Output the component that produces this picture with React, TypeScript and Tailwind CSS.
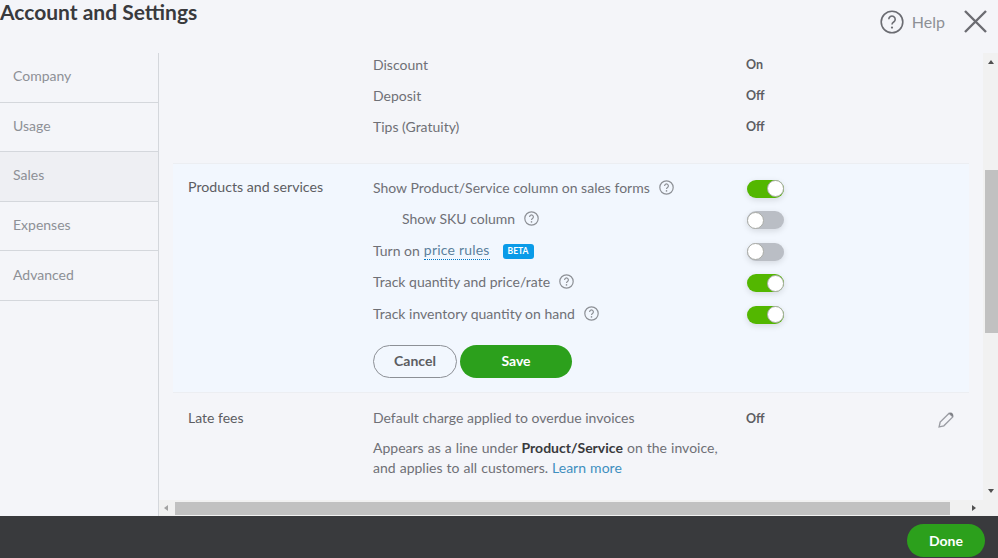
import React from "react";

const font = { fontFamily: 'Lato, "Open Sans", "Liberation Sans", sans-serif' };

function Q({ className = "" }: { className?: string }) {
  return (
    <svg width="15" height="15" viewBox="0 0 15 15" className={"shrink-0 " + className}>
      <circle cx="7.5" cy="7.5" r="6.7" fill="none" stroke="#8d9096" strokeWidth="1.2" />
      <path d="M5.6 5.9a1.9 1.9 0 1 1 2.9 1.6c-.6.4-1 .7-1 1.5" fill="none" stroke="#8d9096" strokeWidth="1.2" />
      <circle cx="7.5" cy="10.9" r=".8" fill="#8d9096" />
    </svg>
  );
}

function Toggle({ on }: { on: boolean }) {
  return (
    <div
      className={
        "w-[37px] h-[18px] rounded-full flex items-center shadow-[0_2px_6px_rgba(0,0,0,0.12)] " +
        (on ? "bg-[#53b700] justify-end" : "bg-[#babec5] justify-start")
      }
    >
      <div className="w-[17px] h-[17px] rounded-full bg-white border border-[#a8aaa5]" />
    </div>
  );
}

function Row({ children, on }: { children: React.ReactNode; on: boolean }) {
  return (
    <div className="h-[31.6px] flex items-center">
      <div className="w-[374px] pb-[3px] flex items-center text-[14px] text-[#6f7076]">{children}</div>
      <Toggle on={on} />
    </div>
  );
}

function Nav({ label, active }: { label: string; active?: boolean }) {
  return (
    <div
      className={
        "h-[49.6px] pl-[13px] pb-[3px] flex items-center text-[14px] text-[#8d9096] border-b border-[#d4d7dc] " +
        (active ? "bg-[#eeeff3]" : "")
      }
    >
      {label}
    </div>
  );
}

function Simple({ label, value }: { label: string; value: string }) {
  return (
    <div className="h-[31px] flex items-center pl-[214px]">
      <div className="w-[373px] pb-[1px] text-[14px] text-[#6f7076]">{label}</div>
      <div className="pt-[1px] text-[12.5px] font-bold text-[#5c5d62]">{value}</div>
    </div>
  );
}

export default function App() {
  return (
    <div style={font} className="w-[998px] h-[558px] bg-[#f4f5f9] flex flex-col overflow-hidden">
      <header className="h-[53px] shrink-0 flex items-start justify-between">
        <h1 className="text-[21px] leading-[24px] font-bold text-[#393a3d]">Account and Settings</h1>
        <div className="flex items-center pt-[9px] pr-[10px]">
          <svg width="24" height="24" viewBox="0 0 24 24">
            <circle cx="12" cy="12" r="10.8" fill="none" stroke="#6b6c72" strokeWidth="1.6" />
            <path d="M8.8 9.3a3.2 3.2 0 1 1 4.9 2.7c-1 .6-1.7 1.1-1.7 2.4" fill="none" stroke="#6b6c72" strokeWidth="1.6" />
            <circle cx="12" cy="17.6" r="1.1" fill="#6b6c72" />
          </svg>
          <span className="ml-[8px] mr-[18px] text-[16px] text-[#8d9096]">Help</span>
          <svg width="25" height="25" viewBox="0 0 25 25">
            <path d="M2 2l21 21M23 2L2 23" stroke="#6b6c72" strokeWidth="2.4" />
          </svg>
        </div>
      </header>

      <div className="flex-1 flex min-h-0">
        <nav className="w-[159px] shrink-0 border-r border-[#d4d7dc]">
          <Nav label="Company" />
          <Nav label="Usage" />
          <Nav label="Sales" active />
          <Nav label="Expenses" />
          <Nav label="Advanced" />
        </nav>

        <div className="flex-1 flex flex-col min-w-0">
          <div className="flex-1 flex min-h-0">
            <main className="flex-1 min-w-0 overflow-hidden">
              <div className="-mt-[4px]">
                <Simple label="Discount" value="On" />
                <Simple label="Deposit" value="Off" />
                <Simple label="Tips (Gratuity)" value="Off" />
              </div>

              <section className="mt-[21px] ml-[14px] w-[796px] h-[230px] bg-[#f2f7fe] border-y border-[#eceef2] flex pl-[15px] pt-[8.8px]">
                <div className="w-[185px] pt-[3px] text-[14.2px] text-[#5c5d62]">Products and services</div>
                <div>
                  <Row on>
                    Show Product/Service column on sales forms
                    <Q className="ml-[9px]" />
                  </Row>
                  <Row on={false}>
                    <span className="ml-[29px]">Show SKU column</span>
                    <Q className="ml-[9px]" />
                  </Row>
                  <Row on={false}>
                    Turn on
                    <span className="ml-[4px] text-[#5b7f9c] border-b border-dotted border-[#0077c5] leading-[19px] tracking-[0.2px]">price rules</span>
                    <span className="ml-[13px] mt-[2px] h-[15px] w-[31px] rounded-[3px] bg-[#0a9be8] text-white text-[8.5px] font-bold flex items-center justify-center">BETA</span>
                  </Row>
                  <Row on>
                    Track quantity and price/rate
                    <Q className="ml-[9px]" />
                  </Row>
                  <Row on>
                    Track inventory quantity on hand
                    <Q className="ml-[9px]" />
                  </Row>
                  <div className="flex mt-[14px]">
                    <button className="w-[84px] h-[33px] pb-[1px] rounded-full border border-[#8d9096] text-[14px] font-bold text-[#5c5d62]">Cancel</button>
                    <button className="ml-[3px] w-[112px] h-[33px] pb-[1px] rounded-full bg-[#2ca01c] text-white text-[14px] font-bold">Save</button>
                  </div>
                </div>
              </section>

              <section className="flex pl-[29px] pt-[15px]">
                <div className="w-[185px] text-[14px] leading-[20px] text-[#5c5d62]">Late fees</div>
                <div className="w-[373px] text-[14px] text-[#6f7076]">
                  <div className="leading-[20px]">Default charge applied to overdue invoices</div>
                  <div className="mt-[10px] leading-[20px] [word-spacing:0.5px]">
                    Appears as a line under <b className="font-bold text-[#393a3d]">Product/Service</b> on the invoice,
                    <br />
                    and applies to all customers. <span className="text-[#3f8fbf]">Learn more</span>
                  </div>
                </div>
                <div className="w-[191px] pt-[1px] text-[12.5px] leading-[20px] font-bold text-[#5c5d62]">Off</div>
                <svg width="19" height="19" viewBox="0 0 18 18" className="mt-[2px]">
                  <path d="M2 16l1-4.5L11.5 3l3.5 3.5L6.5 15z" fill="none" stroke="#9a9ca3" strokeWidth="1.3" />
                  <path d="M11.5 3a2.5 2.5 0 0 1 3.5 3.5z" fill="#7f8187" />
                </svg>
              </section>
            </main>

            <div className="w-[15px] shrink-0 bg-[#f1f1f1] flex flex-col items-center">
              <svg width="8" height="6" viewBox="0 0 8 6" className="mt-[6px]"><path d="M4 1l3 4H1z" fill="#505050" /></svg>
              <div className="w-[13px] ml-[2px] h-[163px] mt-[105px] bg-[#c1c1c1]" />
              <div className="flex-1" />
              <svg width="8" height="6" viewBox="0 0 8 6" className="mb-[6px]"><path d="M4 5l3-4H1z" fill="#505050" /></svg>
            </div>
          </div>

          <div className="h-[16px] shrink-0 flex items-center bg-[#f1f1f1]">
            <svg width="6" height="8" viewBox="0 0 6 8" className="ml-[4px]"><path d="M1 4l4-3v6z" fill="#a3a3a3" /></svg>
            <div className="ml-[6px] w-[775px] h-[13px] bg-[#c1c1c1]" />
            <div className="flex-1" />
            <svg width="6" height="8" viewBox="0 0 6 8" className="mr-[21px]"><path d="M5 4L1 1v6z" fill="#505050" /></svg>
          </div>
        </div>
      </div>

      <footer className="h-[42px] shrink-0 bg-[#393a3d] flex items-end justify-end pr-[13px] pb-[1px]">
        <button className="w-[78px] h-[33px] rounded-full bg-[#2ca01c] text-white text-[14px] font-bold">Done</button>
      </footer>
    </div>
  );
}
